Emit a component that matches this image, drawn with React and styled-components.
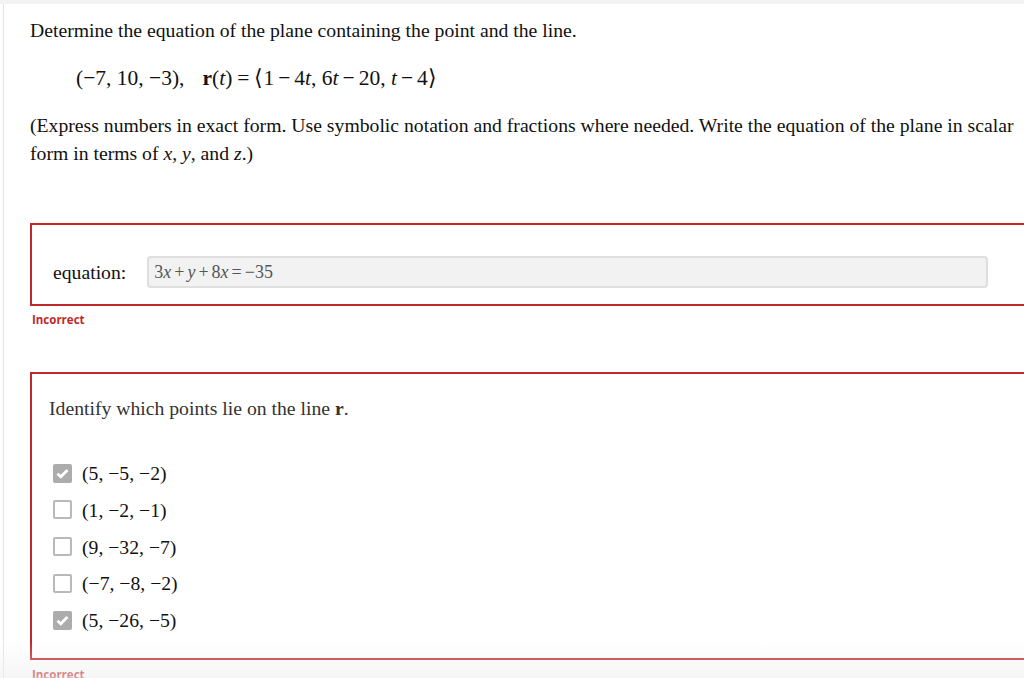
import React from 'react';
import styled, { createGlobalStyle } from 'styled-components';

const GlobalStyle = createGlobalStyle`
  html, body {
    margin: 0;
    padding: 0;
    background: #fff;
  }
  body {
    font-family: "Liberation Serif", "Times New Roman", serif;
    color: #222;
  }
`;

const Page = styled.div`
  position: relative;
  height: 678px;
  overflow: hidden;
  border-top: 4px solid #f2f2f2;
  box-sizing: border-box;
`;

const Sheet = styled.div`
  margin-left: 3px;
  border-left: 1px solid #e4e4e4;
  padding: 16px 0 0 26px;
  min-height: 700px;
`;

const Prompt = styled.p`
  margin: 0;
  font-size: 19.7px;
  line-height: 20px;
  color: #111;
`;

const MathLine = styled.div`
  margin: 28px 0 0 46px;
  font-size: 21.5px;
  line-height: 20px;
  color: #111;
`;

const Gap = styled.span`
  display: inline-block;
  width: ${({ w }) => w}px;
`;

const Op = styled.span`
  margin: 0 ${({ space }) => space}px;
`;

const V = styled.i``;
const B = styled.b``;

const Note = styled.p`
  margin: 23px 0 0;
  max-width: 986px;
  font-size: 19.7px;
  letter-spacing: 0;
  line-height: 28px;
  color: #111;
`;

const Card = styled.div`
  margin-top: ${({ top }) => top}px;
  border: 2px solid #c1282a;
  border-right: none;
  padding: ${({ pad }) => pad};
`;

const FieldRow = styled.div`
  display: flex;
  align-items: center;
  gap: 21px;
`;

const Label = styled.span`
  font-size: 19.7px;
  color: #111;
`;

const Input = styled.div`
  box-sizing: border-box;
  width: 841px;
  height: 32px;
  background: #f2f2f2;
  border: 2px solid #dedede;
  border-radius: 4px;
  padding: 0 5px;
  display: flex;
  align-items: center;
  font-size: 18px;
  color: #555;
`;

const Status = styled.div`
  margin: ${({ top }) => top}px 0 0 2px;
  font-family: "Open Sans", "Liberation Sans", sans-serif;
  font-weight: 700;
  font-size: 11.5px;
  line-height: 16px;
  color: #c1282a;
`;

const Question = styled.p`
  margin: 0;
  font-size: 19.7px;
  line-height: 22px;
  color: #333;
`;

const Options = styled.div`
  margin: 43px 0 0 4px;
  display: flex;
  flex-direction: column;
  gap: 14.75px;
`;

const Option = styled.label`
  display: flex;
  align-items: center;
  gap: 10px;
  font-size: 19.7px;
  line-height: 22px;
  color: #111;
`;

const Box = styled.span`
  box-sizing: border-box;
  width: 19px;
  height: 19px;
  border-radius: 2px;
  border: 2px solid;
  background: ${({ checked }) => (checked ? '#acacac' : '#fff')};
  border-color: ${({ checked }) => (checked ? '#acacac' : '#b9b9b9')};
  display: flex;
  align-items: center;
  justify-content: center;
`;

const Fade = styled.div`
  position: absolute;
  left: 0;
  right: 0;
  bottom: 0;
  height: 36px;
  background: linear-gradient(to bottom, rgba(255, 255, 255, 0), rgba(238, 238, 238, 0.55));
  pointer-events: none;
`;

const Check = () => (
  <svg width="13" height="11" viewBox="0 0 13 11">
    <path d="M1.5 5.8 L4.8 8.8 L11.5 2" fill="none" stroke="#fff" strokeWidth="2.8" />
  </svg>
);

const points = [
  { text: '(5, −5, −2)', checked: true },
  { text: '(1, −2, −1)', checked: false },
  { text: '(9, −32, −7)', checked: false },
  { text: '(−7, −8, −2)', checked: false },
  { text: '(5, −26, −5)', checked: true },
];

const App = () => (
  <Page>
    <GlobalStyle />
    <Sheet>
      <Prompt>Determine the equation of the plane containing the point and the line.</Prompt>
      <MathLine>
        (−7, 10, −3),
        <Gap w={18} />
        <B>r</B>(<V>t</V>)<Op space={5}>=</Op>⟨1<Op space={4}>−</Op>4<V>t</V>, 6<V>t</V>
        <Op space={4}>−</Op>20, <V>t</V>
        <Op space={4}>−</Op>4⟩
      </MathLine>
      <Note>
        (Express numbers in exact form. Use symbolic notation and fractions where needed. Write the equation of
        the plane in scalar form in terms of <V>x</V>, <V>y</V>, and <V>z</V>.)
      </Note>
      <Card top={56} pad="31px 0 16px 21px">
        <FieldRow>
          <Label>equation:</Label>
          <Input>
            3<V>x</V>
            <Op space={3}>+</Op>
            <V>y</V>
            <Op space={3}>+</Op>8<V>x</V>
            <Op space={3}>=</Op>−35
          </Input>
        </FieldRow>
      </Card>
      <Status top={6}>Incorrect</Status>
      <Card top={44} pad="23px 0 27px 17px">
        <Question>
          Identify which points lie on the line <B>r</B>.
        </Question>
        <Options>
          {points.map((p) => (
            <Option key={p.text}>
              <Box checked={p.checked}>{p.checked && <Check />}</Box>
              {p.text}
            </Option>
          ))}
        </Options>
      </Card>
      <Status top={7}>Incorrect</Status>
    </Sheet>
    <Fade />
  </Page>
);

export default App;
